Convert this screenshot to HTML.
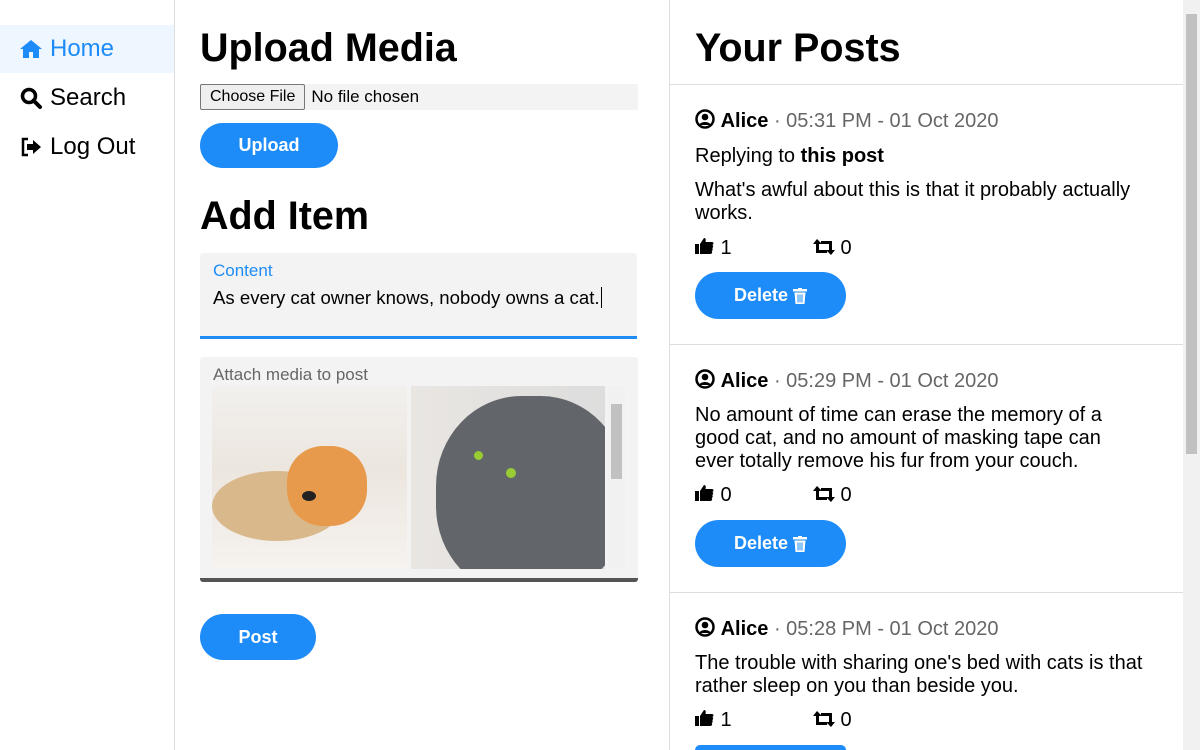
<!DOCTYPE html>
<html style="height:750px;overflow:hidden"><head><style>
*{box-sizing:border-box;margin:0;padding:0}
body{width:1200px;height:750px;overflow:hidden;font-family:"Liberation Sans",sans-serif;background:#fff;position:relative;color:#000}
.abs{position:absolute}
.nav{left:0;width:174px;height:48px;font-size:24px;display:flex;align-items:center;padding-left:20px;gap:8px}
.btn{background:#1d8cf8;color:#fff;font-weight:bold;font-size:18px;border-radius:24px;display:flex;align-items:center;justify-content:center}
h1{font-size:39.5px;font-weight:bold;position:absolute}
.post{font-size:20px}
.meta{color:#666}
</style></head><body>
<div class="abs" style="left:174px;top:0;width:1px;height:750px;background:#ddd"></div>
<div class="abs" style="left:669px;top:0;width:1px;height:750px;background:#ddd"></div>
<div class="abs" style="left:1183px;top:0;width:17px;height:750px;background:#f1f1f1"></div>
<div class="abs" style="left:1186px;top:14px;width:11px;height:440px;background:#c1c1c1"></div>

<div class="abs nav" style="top:25px;background:#eef6ff;color:#1d8cf8">
<svg width="22" height="20" viewBox="0 0 22 20"><path d="M11 1L0 10h3v9h6v-6h4v6h6v-9h3z" fill="#1d8cf8"/></svg>Home</div>
<div class="abs nav" style="top:74px">
<svg width="22" height="22" viewBox="0 0 22 22"><circle cx="9" cy="9" r="6.5" fill="none" stroke="#000" stroke-width="3.5"/><path d="M13.5 13.5L20 20" stroke="#000" stroke-width="4" stroke-linecap="round"/></svg>Search</div>
<div class="abs nav" style="top:123px">
<svg width="22" height="20" viewBox="0 0 22 20"><path d="M8 2H3v16h5" fill="none" stroke="#000" stroke-width="2.5"/><path d="M7 7h6V3l8 7-8 7v-4H7z" fill="#000"/></svg>Log Out</div>

<h1 style="left:200px;top:26px">Upload Media</h1>
<div class="abs" style="left:200px;top:84px;width:438px;height:26px;background:#f3f3f3;font-size:17px;display:flex;align-items:center">
<span style="border:1px solid #777;background:#efefef;border-radius:2px;padding:3px 9px;font-size:16px">Choose File</span><span style="margin-left:6px">No file chosen</span></div>
<div class="abs btn" style="left:200px;top:123px;width:138px;height:45px">Upload</div>
<h1 style="left:200px;top:194px">Add Item</h1>
<div class="abs" style="left:200px;top:253px;width:437px;height:86px;background:#f3f3f3;border-bottom:3px solid #1d8cf8;border-radius:3px 3px 0 0">
<div style="position:absolute;left:13px;top:8px;color:#1d8cf8;font-size:17px">Content</div>
<div style="position:absolute;left:13px;top:34px;font-size:18.6px">As every cat owner knows, nobody owns a cat.<span style="border-left:1px solid #000;margin-left:1px"></span></div></div>
<div class="abs" style="left:200px;top:357px;width:438px;height:225px;background:#f3f3f3;border-bottom:4px solid #555;border-radius:3px">
<div style="position:absolute;left:13px;top:8px;color:#666;font-size:17px">Attach media to post</div>
<div style="position:absolute;left:12px;top:29px;width:195px;height:183px;background:linear-gradient(#f2f0ee 0%,#ece6df 45%,#f6f2ee 100%);overflow:hidden">
<div style="position:absolute;left:0;top:85px;width:130px;height:70px;border-radius:50%;background:#d9b98c"></div>
<div style="position:absolute;left:75px;top:60px;width:80px;height:80px;border-radius:45%;background:#e79a4c"></div>
<div style="position:absolute;left:90px;top:105px;width:14px;height:10px;border-radius:50%;background:#222"></div></div>
<div style="position:absolute;left:211px;top:29px;width:194px;height:183px;background:linear-gradient(90deg,#e9e6e2,#ddd);overflow:hidden">
<div style="position:absolute;left:25px;top:10px;width:190px;height:200px;border-radius:45%;background:#62656a"></div>
<div style="position:absolute;left:63px;top:65px;width:9px;height:9px;border-radius:50%;background:#9c3"></div>
<div style="position:absolute;left:95px;top:82px;width:10px;height:10px;border-radius:50%;background:#9c3"></div></div>
<div style="position:absolute;left:408px;top:29px;width:17px;height:183px;background:#f1f1f1"></div>
<div style="position:absolute;left:411px;top:47px;width:11px;height:75px;background:#c1c1c1"></div></div>
<div class="abs btn" style="left:200px;top:614px;width:116px;height:46px">Post</div>

<h1 style="left:695px;top:26px">Your Posts</h1>
<div class="abs" style="left:670px;top:84px;width:513px;height:1px;background:#ddd"></div>
<div class="abs" style="left:670px;top:344px;width:513px;height:1px;background:#ddd"></div>
<div class="abs" style="left:670px;top:592px;width:513px;height:1px;background:#ddd"></div>

<div class="abs post" style="left:695px;top:109px"><svg width="20" height="20" viewBox="0 0 20 20" style="vertical-align:-2px"><circle cx="10" cy="10" r="8.5" fill="none" stroke="#000" stroke-width="2.5"/><circle cx="10" cy="8" r="3.3" fill="#000"/><path d="M4 16c2-4 10-4 12 0" fill="#000"/></svg> <b>Alice</b> <span class="meta">· 05:31 PM - 01 Oct 2020</span></div>
<div class="abs post" style="left:695px;top:145px">Replying to <b>this post</b></div>
<div class="abs post" style="left:695px;top:179px;line-height:23px;width:470px">What's awful about this is that it probably actually works.</div>

<div class="abs post" style="left:695px;top:369px"><svg width="20" height="20" viewBox="0 0 20 20" style="vertical-align:-2px"><circle cx="10" cy="10" r="8.5" fill="none" stroke="#000" stroke-width="2.5"/><circle cx="10" cy="8" r="3.3" fill="#000"/><path d="M4 16c2-4 10-4 12 0" fill="#000"/></svg> <b>Alice</b> <span class="meta">· 05:29 PM - 01 Oct 2020</span></div>
<div class="abs post" style="left:695px;top:404px;line-height:23px;width:420px">No amount of time can erase the memory of a good cat, and no amount of masking tape can ever totally remove his fur from your couch.</div>

<div class="abs post" style="left:695px;top:617px"><svg width="20" height="20" viewBox="0 0 20 20" style="vertical-align:-2px"><circle cx="10" cy="10" r="8.5" fill="none" stroke="#000" stroke-width="2.5"/><circle cx="10" cy="8" r="3.3" fill="#000"/><path d="M4 16c2-4 10-4 12 0" fill="#000"/></svg> <b>Alice</b> <span class="meta">· 05:28 PM - 01 Oct 2020</span></div>
<div class="abs post" style="left:695px;top:652px;line-height:23px;width:470px">The trouble with sharing one's bed with cats is that rather sleep on you than beside you.</div>

<div id="c1"></div>
<script>
var rows=[[237,272,1,0,47],[484,520,0,0,47],[709,745,1,0,5]];
var thumb='<svg width="20" height="18" viewBox="0 0 20 18" style="vertical-align:-1px"><rect x="0" y="7" width="4" height="10" fill="#000"/><path d="M5 7l4-6c2 0 2 2 1.5 4H17c2 0 2 3 0 3 1.5 0 1.5 3 0 3 1 0 1 3-.5 3 1 0 1 3-1 3H5z" fill="#000"/></svg>';
var rt='<svg width="22" height="16" viewBox="0 0 22 16" style="vertical-align:-1px"><path d="M4 0L0 5h3v9h11v-3H6V5h3z M18 16l4-5h-3V2H8v3h8v6h-3z" fill="#000"/></svg>';
var trash='<svg width="14" height="16" viewBox="0 0 14 16" style="margin-left:5px"><rect x="0" y="1" width="14" height="2.5" fill="#fff"/><rect x="5" y="0" width="4" height="2" fill="#fff"/><path d="M1.5 4.5h11l-1 11.5h-9z" fill="#fff"/><path d="M5 6.5v8M7 6.5v8M9 6.5v8" stroke="#1d8cf8" stroke-width="1"/></svg>';
var h='';
rows.forEach(function(r){
h+='<div class="abs post" style="left:695px;top:'+r[0]+'px">'+thumb+' '+r[2]+'</div>';
h+='<div class="abs post" style="left:813px;top:'+r[0]+'px">'+rt+' '+r[3]+'</div>';
if(r[4]>10) h+='<div class="abs btn" style="left:695px;top:'+r[1]+'px;width:151px;height:47px">Delete'+trash+'</div>';
else h+='<div class="abs" style="left:695px;top:'+r[1]+'px;width:151px;height:5px;background:#1d8cf8;border-radius:24px 24px 0 0"></div>';
});
document.getElementById('c1').innerHTML=h;
</script>
</body></html>
